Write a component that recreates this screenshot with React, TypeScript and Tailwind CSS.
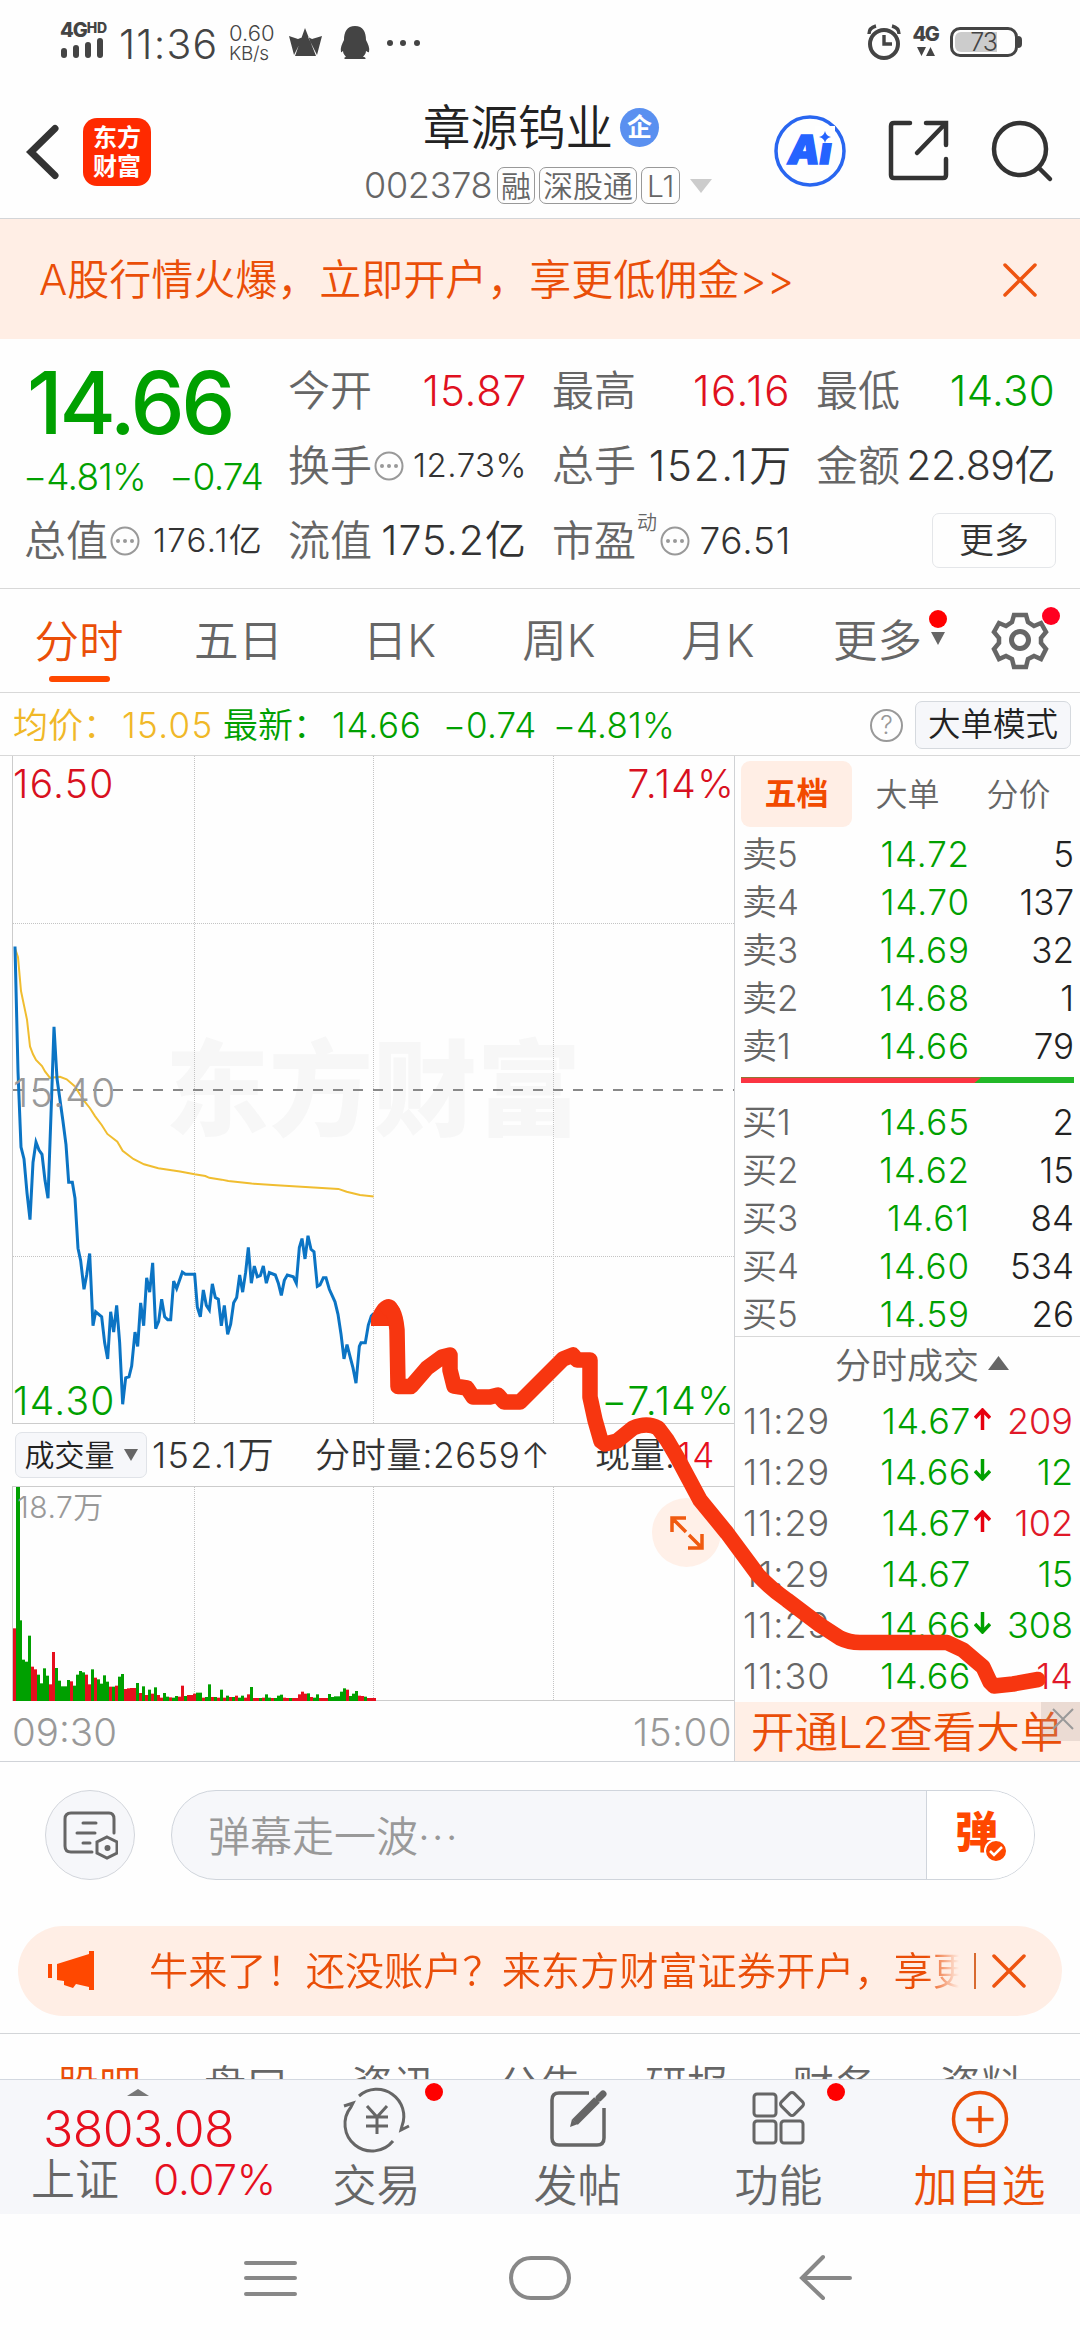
import type { ReactNode } from 'react'

const priceLine =
  '45,130 54,480 63,692 72,725 81,820 90,895 99,735 108,678 117,700 126,712 135,785 144,835 153,600 162,355 171,500 180,560 189,620 198,685 206,790 217,790 225,835 234,975 242,1010 252,1090 260,1050 269,990 279,1192 287,1153 305,1167 314,1240 323,1285 332,1153 341,1210 350,1135 359,1240 368,1412 377,1338 387,1335 395,1305 405,1210 413,1250 422,1128 431,1192 440,1058 449,1098 458,1016 467,1200 476,1180 485,1118 494,1167 503,1175 512,1175 521,1067 530,1088 547,1042 556,1048 584,1048 592,1140 601,1167 610,1092 619,1135 628,1148 637,1075 646,1113 655,1118 664,1192 673,1135 683,1216 692,1188 701,1128 710,1113 719,1050 728,1098 737,1042 745,973 754,1073 763,1025 772,1055 781,1052 790,1025 799,1073 808,1043 826,1050 835,1073 844,1107 853,1065 862,1050 880,1055 889,1073 898,973 906,948 915,1005 924,940 933,978 942,985 952,1082 960,1078 970,1058 978,1058 988,1090 1005,1125 1014,1160 1023,1215 1032,1285 1041,1245 1050,1278 1059,1310 1068,1353 1078,1250 1083,1240 1096,1240 1105,1190 1114,1165 1121,1158'

const averageLine =
  '45,135 54,160 63,255 72,295 81,335 90,410 99,432 108,448 126,465 135,480 150,498 180,495 200,502 225,522 250,560 270,583 285,605 305,630 322,655 352,677 368,702 400,725 432,740 475,751 540,760 584,768 616,773 628,778 665,783 685,787 755,794 830,799 1015,809 1040,817 1080,826 1121,830'

// one entry per minute, colour + height
const volumes =
  'r218 g643 g242 g124 g118 g196 r103 r95 g79 g53 g98 g76 r50 r147 g99 g61 g44 g44 g63 r59 g46 g79 g90 g86 r79 r50 g95 r70 g65 g52 g77 g58 r43 g43 r46 g73 g81 r36 r38 r39 r39 g54 r24 g44 r18 g34 r22 g41 r18 r10 g24 g13 r11 g10 g15 r13 r46 g15 r18 r18 r22 g25 g25 r10 g12 g50 r12 g12 r10 g34 r10 g16 r12 g12 r16 g10 g16 r10 r20 g42 r9 r9 g9 r10 g20 g10 r9 g9 g16 g19 r10 r9 g9 r9 r9 r20 r28 r22 g23 r12 g10 g20 r9 r9 r9 g21 g12 g14 g14 g28 g38 r34 g15 g22 g30 r16 r15 g13 r9 r9 r9'.split(
    ' '
  )

const sellOrders = [
  ['卖5', '14.72', '5'],
  ['卖4', '14.70', '137'],
  ['卖3', '14.69', '32'],
  ['卖2', '14.68', '1'],
  ['卖1', '14.66', '79'],
]

const buyOrders = [
  ['买1', '14.65', '2'],
  ['买2', '14.62', '15'],
  ['买3', '14.61', '84'],
  ['买4', '14.60', '534'],
  ['买5', '14.59', '26'],
]

const trades = [
  { time: '11:29', price: '14.67', dir: 'up', amount: '209', red: true },
  { time: '11:29', price: '14.66', dir: 'down', amount: '12', red: false },
  { time: '11:29', price: '14.67', dir: 'up', amount: '102', red: true },
  { time: '11:29', price: '14.67', dir: '', amount: '15', red: false },
  { time: '11:29', price: '14.66', dir: 'down', amount: '308', red: false },
  { time: '11:30', price: '14.66', dir: '', amount: '14', red: true },
]

const infoTabs = ['股吧', '盘口', '资讯', '公告', '研报', '财务', '资料']

const StatusBar = () => (
  <div className="flex h-[84px] shrink-0 items-start pt-[22px] pl-[60px] text-[#444]">
    <div className="w-[46px]">
      <div className="flex h-[16px] items-start text-[20px] leading-[16px] font-extrabold tracking-[-1px]">
        4G<span className="text-[14px] leading-[11px] tracking-[-0.3px]">HD</span>
      </div>
      <div className="flex h-[20px] items-end gap-[6px] pl-[1px]">
        <i className="h-[10px] w-[6px] rounded-sm bg-[#444]" />
        <i className="h-[13px] w-[6px] rounded-sm bg-[#444]" />
        <i className="h-[16px] w-[6px] rounded-sm bg-[#444]" />
        <i className="h-[20px] w-[6px] rounded-sm bg-[#444]" />
      </div>
    </div>
    <div className="ml-[13px] w-[107px] pt-[2px] text-[41px] leading-[40px] tracking-[1.2px]">11:36</div>
    <div className="ml-[3px] w-[58px] text-[22px] leading-[22px]">
      <div>0.60</div>
      <div className="text-[19px] leading-[19px] tracking-[-0.3px]">KB/s</div>
    </div>
    <svg className="mt-[4px] ml-[2px]" width="134" height="36" viewBox="289 26 134 36" fill="#444">
      <path d="M305 28 316 56H295zM289 36l9 3 5-2-9 18zM322 36l-10 3-4-2 9 18z" />
      <path d="M355 26c8 0 11 6 11 14 2 4 4 8 3 12-1 1-2-1-3-1 0 3-2 4-3 6 3 0 3 2 2 2H345c-1 0-1-2 1-2-1-2-3-3-3-6-1 0-1 2-2 1-1-4 1-8 3-12 0-8 3-14 11-14z" />
      <circle cx="390" cy="43" r="3" />
      <circle cx="403" cy="43" r="3" />
      <circle cx="417" cy="43" r="3" />
    </svg>
    <div className="ml-auto flex items-start pr-[58px]">
      <svg width="35" height="38" viewBox="0 0 35 38" fill="none" stroke="#444" strokeWidth="4">
        <circle cx="17" cy="22" r="14" />
        <path d="M17 13v9h8M2 12c0-5 3-7 7-8M32 12c0-5-3-7-7-8" strokeWidth="3.4" />
      </svg>
      <div className="ml-[11px] flex w-[25px] flex-col items-center pt-[4px]">
        <span className="text-[20px] leading-[16px] font-extrabold tracking-[-1.5px]">4G</span>
        <svg className="mt-[5px]" width="18" height="10" fill="#444">
          <path d="M0 0h9L4.500 9zM9 9h9L13.500 0z" />
        </svg>
      </div>
      <div className="ml-[12px] flex items-center pt-[5px]">
        <div className="flex h-[30px] w-[68px] items-center rounded-[10px] border-[3px] border-[#444] p-[2px]">
          <div className="flex h-full w-[42px] items-center justify-end rounded-l-[6px] bg-[#ccc] text-[25px] leading-none tracking-[-1px]">
            73
          </div>
        </div>
        <i className="h-[12px] w-[4px] rounded-r-full bg-[#444]" />
      </div>
    </div>
  </div>
)

const Tag = ({ children }: { children: ReactNode }) => (
  <span className="flex h-[37px] items-center rounded-[7px] border-[1.500px] border-[#999] px-[3px] text-[30px] leading-none text-[#666]">
    {children}
  </span>
)

const Header = () => (
  <header className="flex h-[135px] shrink-0 items-start border-b border-[#d3d5d8]">
    <svg className="mt-[38px] ml-[24px]" width="38" height="60" fill="none" stroke="#333" strokeWidth="7" strokeLinecap="round">
      <path d="M31 6.500 7 30l24 23.500" />
    </svg>
    <div className="mt-[34px] ml-[21px] flex h-[68px] w-[68px] flex-col items-center justify-center rounded-[14px] bg-[#ff2a00] text-[24px] leading-[29px] font-bold text-white">
      <span>东方</span>
      <span>财富</span>
    </div>
    <div className="ml-[213px] w-[350px]">
      <div className="flex h-[68px] items-end pl-[59px]">
        <h1 className="relative top-[2px] text-[47.500px] leading-[52px] font-[350] text-[#222]">章源钨业</h1>
        <span className="mb-[5px] ml-[7px] flex h-[39px] w-[39px] items-center justify-center rounded-full bg-[#5a90f0] text-[25px] leading-none font-bold text-white">
          企
        </span>
      </div>
      <div className="mt-[15px] flex items-center gap-[4px]">
        <span className="w-[129px] text-[36px] leading-[37px] tracking-[-0.3px] text-[#666]">002378</span>
        <Tag>融</Tag>
        <Tag>深股通</Tag>
        <Tag>
          <span className="px-[2px]">L1</span>
        </Tag>
        <svg className="ml-[6px]" width="22" height="14" fill="#ccc">
          <path d="M0 0h22L11 14z" />
        </svg>
      </div>
    </div>
    <svg className="mt-[28px] ml-[57px]" width="78" height="78" viewBox="0 0 78 78">
      <circle cx="39" cy="39" r="34" fill="none" stroke="#2966f0" strokeWidth="3.500" />
      <text x="17" y="52" fontSize="40" fontWeight="900" fontStyle="italic" fill="#2563ff" stroke="#2563ff" strokeWidth="1.500">
        Ai
      </text>
      <path d="M44 14h20v17H44z" fill="#fff" />
      <path d="M54 19q1 5 6 6q-5 1-6 6q-1-5-6-6q5-1 6-6z" fill="#2563ff" />
    </svg>
    <svg className="mt-[35px] ml-[38px]" width="64" height="64" fill="none" stroke="#333" strokeWidth="4.500" strokeLinecap="round">
      <path d="M24 5H8q-3 0-3 3v49q0 3 3 3h49q3 0 3-3V41M40 5h20v22M59 6 31 35" transform="translate(-1 -1)" />
    </svg>
    <svg className="mt-[35px] ml-[39px]" width="66" height="66" fill="none" stroke="#333" strokeWidth="4.500" strokeLinecap="round">
      <circle cx="30" cy="30" r="26" />
      <path d="m49 49 11 11" />
    </svg>
  </header>
)

const CloseIcon = () => (
  <svg width="34" height="34" fill="none" stroke="#ee5410" strokeWidth="3.500" strokeLinecap="round">
    <path d="m2 2 30 30M32 2 2 32" />
  </svg>
)

const Dots = () => (
  <svg className="ml-[2px] shrink-0" width="30" height="30" fill="#999">
    <circle cx="15" cy="15" r="13.500" fill="none" stroke="#999" strokeWidth="2" />
    <circle cx="8" cy="15" r="2" />
    <circle cx="15" cy="15" r="2" />
    <circle cx="22" cy="15" r="2" />
  </svg>
)

const Cell = ({ label, children }: { label: ReactNode; children?: ReactNode }) => (
  <div className="flex h-[75px] items-center justify-between whitespace-nowrap">
    <span className="-ml-px flex items-center text-[42px] leading-none text-[#666]">{label}</span>
    {children}
  </div>
)

const Quote = () => (
  <section className="grid h-[250px] shrink-0 grid-cols-[238px_238px_238px_238px] gap-x-[26px] border-b border-[#d8d8d8] pt-[14px] pl-[25px] text-[#333]">
    <div className="flex flex-col">
      <span className="pt-[3px] pl-[2px] text-[86px] leading-[94px] font-medium tracking-[-3.200px] text-[#00a000]">14.66</span>
      <div className="-ml-[2px] flex h-[53px] items-center justify-between text-[37px] leading-none tracking-[-0.800px] whitespace-nowrap text-[#00a000]">
        <span>−4.81%</span>
        <span>−0.74</span>
      </div>
      <Cell label={<>总值<Dots /></>}>
        <span className="text-[33px] leading-none tracking-[1.300px]">176.1亿</span>
      </Cell>
    </div>
    <div>
      <Cell label="今开">
        <span className="text-[42px] leading-none tracking-[0.800px] text-[#e01020]">15.87</span>
      </Cell>
      <Cell label={<>换手<Dots /></>}>
        <span className="text-[33px] leading-none tracking-[0.500px]">12.73%</span>
      </Cell>
      <Cell label="流值">
        <span className="text-[41px] leading-none tracking-[1px]">175.2亿</span>
      </Cell>
    </div>
    <div>
      <Cell label="最高">
        <span className="text-[42px] leading-none tracking-[1.500px] text-[#e01020]">16.16</span>
      </Cell>
      <Cell label="总手">
        <span className="-mr-[2px] text-[42px] leading-none tracking-[1.700px]">152.1万</span>
      </Cell>
      <Cell label={<>市盈<span className="-mt-[36px] mr-[1px] ml-[1px] text-[20px] leading-none">动</span><Dots /></>}>
        <span className="text-[37px] leading-none tracking-[0.800px]">76.51</span>
      </Cell>
    </div>
    <div>
      <Cell label="最低">
        <span className="text-[42px] leading-none tracking-[0.300px] text-[#00a000]">14.30</span>
      </Cell>
      <Cell label="金额">
        <span className="text-[41px] leading-none tracking-[-0.500px]">22.89亿</span>
      </Cell>
      <div className="flex h-[75px] items-center justify-end">
        <button className="-mr-[1px] h-[55px] w-[124px] rounded-[7px] border-[1.500px] border-[#e4e6e9] text-[35px] leading-none">更多</button>
      </div>
    </div>
  </section>
)

const PeriodTabs = () => (
  <nav className="flex h-[104px] shrink-0 items-center border-b border-[#d8d8d8] text-[44.500px] leading-none text-[#666]">
    <div className="flex h-full w-[158px] flex-col items-center pt-[31px] text-[#ea4e08]">
      分时
      <i className="mt-[11px] h-[6px] w-[61px] rounded-full bg-[#ff4800]" />
    </div>
    <span className="w-[161px] pt-px text-center">五日</span>
    <span className="w-[161px] pt-px text-center">日K</span>
    <span className="w-[158px] pt-px text-center">周K</span>
    <span className="w-[160px] pt-px text-center">月K</span>
    <span className="ml-[35px] pt-px">更多</span>
    <svg className="mt-[-25px] ml-[6px]" width="20" height="36">
      <circle cx="10" cy="9" r="9" fill="#f00" />
      <path d="M3 22h14L10 35z" fill="#666" />
    </svg>
    <svg className="mt-[-5px] ml-[41px]" width="72" height="66" fill="none" stroke="#666" strokeWidth="5">
      <path d="M25 9h12l2 7 6 4 7-3 5 9-5 6v5l5 6-5 10-7-3-6 3-2 8H25l-2-8-6-3-7 3-5-10 5-6v-5l-5-6 5-9 7 3 6-4z" transform="translate(0 1)" strokeWidth="4.500" />
      <circle cx="31" cy="35" r="8.500" />
      <circle cx="62" cy="11" r="9" fill="#ff0020" stroke="none" />
    </svg>
  </nav>
)

const Legend = () => (
  <div className="flex h-[63px] shrink-0 items-center border-b border-[#d8d8d8] pt-[2px] pl-[13px] text-[35px] leading-none whitespace-nowrap text-[#00a000]">
    <span className="w-[109px] text-[#f0b828]">均价：</span>
    <span className="w-[101px] tracking-[1.300px] text-[#f0b828]">15.05</span>
    <span className="w-[109px]">最新：</span>
    <span className="w-[111px] tracking-[0.800px]">14.66</span>
    <span className="w-[110px] tracking-[0.200px]">−0.74</span>
    <span className="tracking-[0.200px]">−4.81%</span>
    <span className="ml-auto flex h-[33px] w-[33px] items-center justify-center rounded-full border-2 border-[#999] text-[25px] text-[#999]">?</span>
    <button className="mr-[9px] ml-[12px] h-[48px] w-[156px] rounded-[7px] border-[1.500px] border-[#d5d9de] bg-[#f6f7fa] text-[32.500px] text-[#222]">
      大单模式
    </button>
  </div>
)

const TrendChart = () => (
  <div className="relative ml-[12px] h-[668px] border-b border-l border-[#ccc] text-[39px] leading-none tracking-[1.300px]">
    <span className="absolute top-[282px] left-[152px] text-[104px] leading-none font-black tracking-normal text-[#f7f7f7]">东方财富</span>
    <svg className="absolute inset-0" width="721" height="668" viewBox="13 756 721 668" fill="none">
      <path d="M13 923.500H734M13 1256.500H734M194.500 756V1423M373.500 756V1423M553.500 756V1423" stroke="#c4c4c4" strokeDasharray="1 1" />
      <path d="M13 1090H734" stroke="#888" strokeWidth="2" strokeDasharray="10 10" />
      <g transform="translate(0 900) scale(.33333 .35714)">
        <polyline points={averageLine} stroke="#f0bd30" strokeWidth="2" vectorEffect="non-scaling-stroke" />
        <polyline points={priceLine} stroke="#0b74c4" strokeWidth="3" vectorEffect="non-scaling-stroke" />
      </g>
    </svg>
    <span className="absolute top-[8px] left-0 text-[#d81020]">16.50</span>
    <span className="absolute top-[8px] -right-px text-[#d81020]">7.14%</span>
    <span className="absolute top-[317px] left-0 text-[#999]">15.40</span>
    <span className="absolute top-[625px] left-0 text-[#00a000]">14.30</span>
    <span className="absolute top-[625px] -right-px text-[#00a000]">−7.14%</span>
  </div>
)

const VolumeChart = () => (
  <div className="relative ml-[12px] h-[215px] border-y border-l border-[#ccc]">
    <svg className="absolute inset-0" width="721" height="214" viewBox="13 1487 721 214">
      <path d="M194.500 1487V1701M373.500 1487V1701M553.500 1487V1701" stroke="#c4c4c4" strokeDasharray="1 1" />
      {volumes.map((v, i) => {
        const h = Number(v.slice(1)) / 3
        return (
          <rect key={i} x={13 + i * 3} y={1701 - h} width={i === 1 ? 4 : 3} height={h} fill={v[0] === 'r' ? '#e60f1e' : '#00a000'} />
        )
      })}
    </svg>
    <span className="absolute top-[5px] left-[4px] text-[30px] leading-none tracking-[0.500px] text-[#999]">18.7万</span>
    <span className="absolute top-[11px] right-[13px] flex h-[69px] w-[69px] items-center justify-center rounded-full bg-[#fff0e8]">
      <svg width="34" height="34" fill="none" stroke="#f05a10" strokeWidth="3.500">
        <path d="M16 2H2v14M2 2l14 14M18 32h14V18M32 32 19 19" />
      </svg>
    </span>
  </div>
)

const Charts = () => (
  <div className="flex w-[734px] flex-col">
    <TrendChart />
    <div className="flex h-[62px] items-center pl-[15px] text-[35px] leading-none whitespace-nowrap text-[#333]">
      <button className="flex h-[46px] w-[132px] items-center justify-center gap-[9px] rounded-[7px] border-[1.500px] border-[#e0e3e8] bg-[#f6f7fa] text-[30px] text-[#222]">
        成交量
        <svg width="14" height="12" fill="#666">
          <path d="M0 0h14L7 12z" />
        </svg>
      </button>
      <span className="ml-[5px] w-[163px] text-[36px] tracking-[1.400px]">152.1万</span>
      <span className="w-[280px] tracking-[0.800px]">分时量:2659↑</span>
      <span>现量:</span>
      <span className="ml-[2px] tracking-[1.500px] text-[#e60f1e]">14</span>
    </div>
    <VolumeChart />
    <div className="flex h-[60px] items-center justify-between pt-[2px] pr-[2px] pl-[12px] text-[38.500px] leading-none text-[#999]">
      <span>09:30</span>
      <span className="tracking-[0.500px]">15:00</span>
    </div>
  </div>
)

const OrderRows = ({ rows }: { rows: string[][] }) => (
  <>
    {rows.map(([label, price, amount]) => (
      <div key={label} className="flex h-[48px] items-center pt-[4px] text-[35px] leading-none">
        <span className="w-[90px] text-[#666]">{label}</span>
        <span className="w-[138px] text-right tracking-[0.900px] text-[#00a000]">{price}</span>
        <span className="flex-1 text-right text-[#222]">{amount}</span>
      </div>
    ))}
  </>
)

const OrderBook = () => (
  <aside className="flex flex-1 flex-col border-l border-[#d0d2d5]">
    <div className="flex h-[75px] items-center pl-[6px] text-[32px] leading-none text-[#666]">
      <span className="mt-[4px] flex h-[66px] w-[111px] items-center justify-center rounded-[9px] bg-[#ffeee5] font-bold text-[#f24a00]">五档</span>
      <span className="mt-[5px] w-[111px] text-center">大单</span>
      <span className="mt-[5px] w-[111px] text-center">分价</span>
    </div>
    <div className="pr-[6px] pl-[7px]">
      <OrderRows rows={sellOrders} />
      <div className="mt-[9px] mb-[13px] -ml-px flex h-[6px] bg-[#22b828]">
        <i className="h-full w-[240px] bg-[#fb3442] [clip-path:polygon(0_0,100%_0,97%_100%,0_100%)]" />
      </div>
      <OrderRows rows={buyOrders} />
    </div>
    <div className="flex h-[58px] shrink-0 items-center justify-center gap-[9px] border-t border-[#d8d8d8] pl-[29px] text-[36px] leading-none text-[#666]">
      分时成交
      <svg className="-mt-[6px]" width="21" height="14" fill="#666">
        <path d="M0 14h21L10.500 0z" />
      </svg>
    </div>
    <div className="flex flex-1 flex-col pt-px pr-[7px] pl-[8px]">
      {trades.map((t, i) => (
        <div key={i} className="flex h-[51.100px] items-center text-[36px] leading-none">
          <span className="w-[100px] tracking-[1px] text-[#666]">{t.time}</span>
          <span className="w-[128px] text-right tracking-[0.500px] text-[#00a000]">{t.price}</span>
          <svg className="mt-[-4px] ml-[3px]" width="17" height="22" fill="none" stroke={t.dir === 'up' ? '#e6000f' : '#00a000'} strokeWidth="3.500">
            {t.dir === 'up' && <path d="M8.500 22V2M1 10l7.500-8 7.500 8" />}
            {t.dir === 'down' && <path d="M8.500 0v20M1 12l7.500 8 7.500-8" />}
          </svg>
          <span className={t.red ? 'flex-1 text-right text-[#e01828]' : 'flex-1 text-right text-[#00a000]'}>{t.amount}</span>
        </div>
      ))}
    </div>
    <div className="relative flex h-[59px] shrink-0 items-center bg-[#ffefe6] pt-[2px] pl-[16px] text-[43.500px] leading-none whitespace-nowrap text-[#ea4e08]">
      开通L2查看大单
      <span className="absolute top-0 right-0 flex h-[39px] w-[39px] items-center justify-center bg-[#b0a09a]/25">
        <svg className="-mt-[5px] ml-[5px]" width="22" height="22" stroke="#999" strokeWidth="2">
          <path d="m1 1 20 20M21 1 1 21" />
        </svg>
      </span>
    </div>
  </aside>
)

const Barrage = () => (
  <div className="flex h-[164px] shrink-0 items-start pt-[28px] pl-[45px]">
    <span className="flex h-[90px] w-[90px] items-center justify-center rounded-full border border-[#d3d6dc] bg-[#f6f7fa]">
      <svg width="56" height="50" fill="none" stroke="#666" strokeWidth="3" strokeLinecap="round">
        <path d="M30 42H9q-6 0-6-6V9q0-6 6-6h38q5 0 5 6v14" />
        <path d="M21 13h13M15 23h18M21 33h7" />
        <path d="m46 29 10 5v11l-10 5-10-5V34z" transform="translate(-1 -2)" />
        <circle cx="45.500" cy="38" r="1.500" fill="#666" />
      </svg>
    </span>
    <div className="ml-[36px] flex h-[90px] w-[864px] overflow-hidden rounded-full border border-[#d0d5dc] bg-[#f6f7fa]">
      <span className="flex-1 pt-[25px] pl-[36px] text-[42px] leading-none text-[#999]">
        弹幕走一波<span className="tracking-[2px]">···</span>
      </span>
      <span className="relative w-[108px] border-l border-[#d0d5dc] bg-white pt-[20px] pl-[28px] text-[43px] leading-none font-black text-[#ff4800]">
        弹
        <svg className="absolute top-[48px] left-[57px]" width="24" height="24">
          <circle cx="12" cy="12" r="11" fill="#ff4800" stroke="#fff" strokeWidth="2" />
          <path d="m6 12 4 4 8-8" fill="none" stroke="#fff" strokeWidth="2.500" />
        </svg>
      </span>
    </div>
  </div>
)

const Notice = () => (
  <div className="mx-[18px] flex h-[90px] shrink-0 items-center rounded-full bg-[#ffeee5] text-[#ea4e08]">
    <svg className="ml-[30px]" width="46" height="40" fill="#ff4800">
      <path d="M0 13h4v14H0zM9 13 41 3V0h5v39h-5v-3l-13-3-3 4-9-3V30l-7-1z" />
    </svg>
    <div className="ml-[55px] w-[810px] overflow-hidden text-[39.200px] leading-[48px] whitespace-nowrap [mask-image:linear-gradient(to_right,#000_96%,transparent)]">
      牛来了！还没账户？来东方财富证券开户，享更低佣金
    </div>
    <i className="mr-[16px] ml-[15px] h-[36px] w-[1.500px] bg-[#d86a30]" />
    <CloseIcon />
  </div>
)

const NavItem = ({ label, dot, children }: { label: string; dot?: boolean; children: ReactNode }) => (
  <div className="relative flex w-[201px] flex-col items-center pt-[8px]">
    <svg className="overflow-visible" width="68" height="62" fill="none" stroke="currentColor" strokeWidth="3.500">
      {children}
    </svg>
    <span className="mt-[14px] text-[44px] leading-none">{label}</span>
    {dot && <i className="absolute top-[3px] left-[149px] h-[18px] w-[18px] rounded-full bg-[#f00]" />}
  </div>
)

const BottomBar = () => (
  <nav className="flex h-[135px] shrink-0 border-t border-[#d3d8e0] bg-[#f6f7fa] pl-px text-[#666]">
    <div className="w-[275px] pt-[9px] pl-[30px] whitespace-nowrap text-[#e60f1e]">
      <svg className="ml-[96px]" width="22" height="7" fill="#777">
        <path d="M0 7h22L11 0z" />
      </svg>
      <div className="mt-[8px] pl-[12px] text-[50px] leading-[50px] tracking-[-0.600px]">3803.08</div>
      <div className="flex items-center justify-between pt-[3px] text-[42px] leading-[46px]">
        <span className="text-[44px] text-[#666]">上证</span>
        <span className="tracking-[-0.200px]">0.07%</span>
      </div>
    </div>
    <NavItem label="交易" dot>
      <path d="M17 8a27 27 0 0 1 43 30l-1 4 8-4M51 53A27 27 0 0 1 9 19l2-4-9 3" transform="translate(-1 0)" strokeWidth="3" />
      <path d="m24 18 10 11 10-11M34 29v17M23 29h22M23 38h22" strokeWidth="3" />
    </NavItem>
    <NavItem label="发帖">
      <path d="M45 5H15q-7 0-7 7v38q0 7 7 7h38q7 0 7-7V20" />
      <path d="m31 34 22-22" strokeWidth="8" />
      <path d="M55 10l4-4" strokeWidth="7" strokeLinecap="round" />
      <path d="m26 39 2-8 6 5z" fill="currentColor" stroke="none" />
    </NavItem>
    <NavItem label="功能" dot>
      <rect x="9" y="6" width="22" height="22" rx="3" strokeWidth="3" />
      <rect x="9" y="33" width="22" height="22" rx="3" strokeWidth="3" />
      <rect x="36" y="33" width="22" height="22" rx="3" strokeWidth="3" />
      <rect x="38" y="7" width="18" height="18" rx="3" strokeWidth="3" transform="rotate(45 47 16)" />
    </NavItem>
    <div className="text-[#ea4e08]">
      <NavItem label="加自选">
        <circle cx="34" cy="31" r="26.500" />
        <path d="M34 18v27M20.500 31.500h27" />
      </NavItem>
    </div>
  </nav>
)

const SystemBar = () => (
  <div className="flex flex-1 items-start pt-[40px]">
    <svg className="ml-[242px]" width="57" height="48" stroke="#888" strokeWidth="4" strokeLinecap="round">
      <path d="M4 9h49M4 24h49M4 40h49" />
    </svg>
    <i className="mt-[2px] ml-[210px] h-[44px] w-[62px] rounded-full border-4 border-[#888]" />
    <svg className="ml-[227px]" width="56" height="48" fill="none" stroke="#888" strokeWidth="4" strokeLinecap="round">
      <path d="M52 24H5M25 3 4 24l21 20" />
    </svg>
  </div>
)

// freehand forecast drawn over the page
const Scribble = () => (
  <svg className="pointer-events-none absolute inset-0" width="1080" height="2340" fill="none">
    <path d="M371 1326V1318Q378 1299 389 1299Q401 1300 402 1326z" fill="#f73610" />
    <path
      d="M388 1308Q395 1308 397 1330L398 1386.500H411L427 1368 442 1357 450 1355V1370L454 1386 467 1388 473 1397H490L498 1395 504 1402H520L547 1375 563 1359 573 1355 577 1360H590V1397L595 1420 601 1441 605 1444 617 1441 633 1428Q647 1422 658 1428L667 1440 677 1457 700 1500 727 1533 758 1575Q770 1588 787 1600L820 1625 840 1638Q849 1642.500 860 1642.500H947L963 1650 983 1667 990 1682 994 1686 1013 1684 1038 1679.500"
      stroke="#f73610"
      strokeWidth="15.500"
      strokeLinejoin="round"
      strokeLinecap="round"
    />
  </svg>
)

const App = () => {
  return (
    <main className="relative flex h-[2340px] w-[1080px] flex-col overflow-hidden bg-[#fefefe] font-['Inter','Noto_Sans_CJK_SC',sans-serif] font-[350]">
      <StatusBar />
      <Header />
      <div className="flex h-[120px] shrink-0 items-center justify-between bg-[#ffeee5] pt-[2px] pr-[43px] pl-[39px] text-[42px] leading-none text-[#ea4e08]">
        <span>A股行情火爆，立即开户，享更低佣金&gt;&gt;</span>
        <CloseIcon />
      </div>
      <Quote />
      <PeriodTabs />
      <Legend />
      <div className="flex h-[1006px] shrink-0 border-b border-[#d0d3d8]">
        <Charts />
        <OrderBook />
      </div>
      <Barrage />
      <Notice />
      <div className="mt-[17px] flex h-[46px] shrink-0 items-start justify-between overflow-hidden border-t border-[#d3d5d8] px-[57px] pt-[31px] text-[42px] leading-none text-[#666]">
        {infoTabs.map((tab, index) => (
          <span key={tab} className={index === 0 ? 'text-[#ea4e08]' : ''}>
            {tab}
          </span>
        ))}
      </div>
      <BottomBar />
      <SystemBar />
      <Scribble />
    </main>
  )
}

export default App
